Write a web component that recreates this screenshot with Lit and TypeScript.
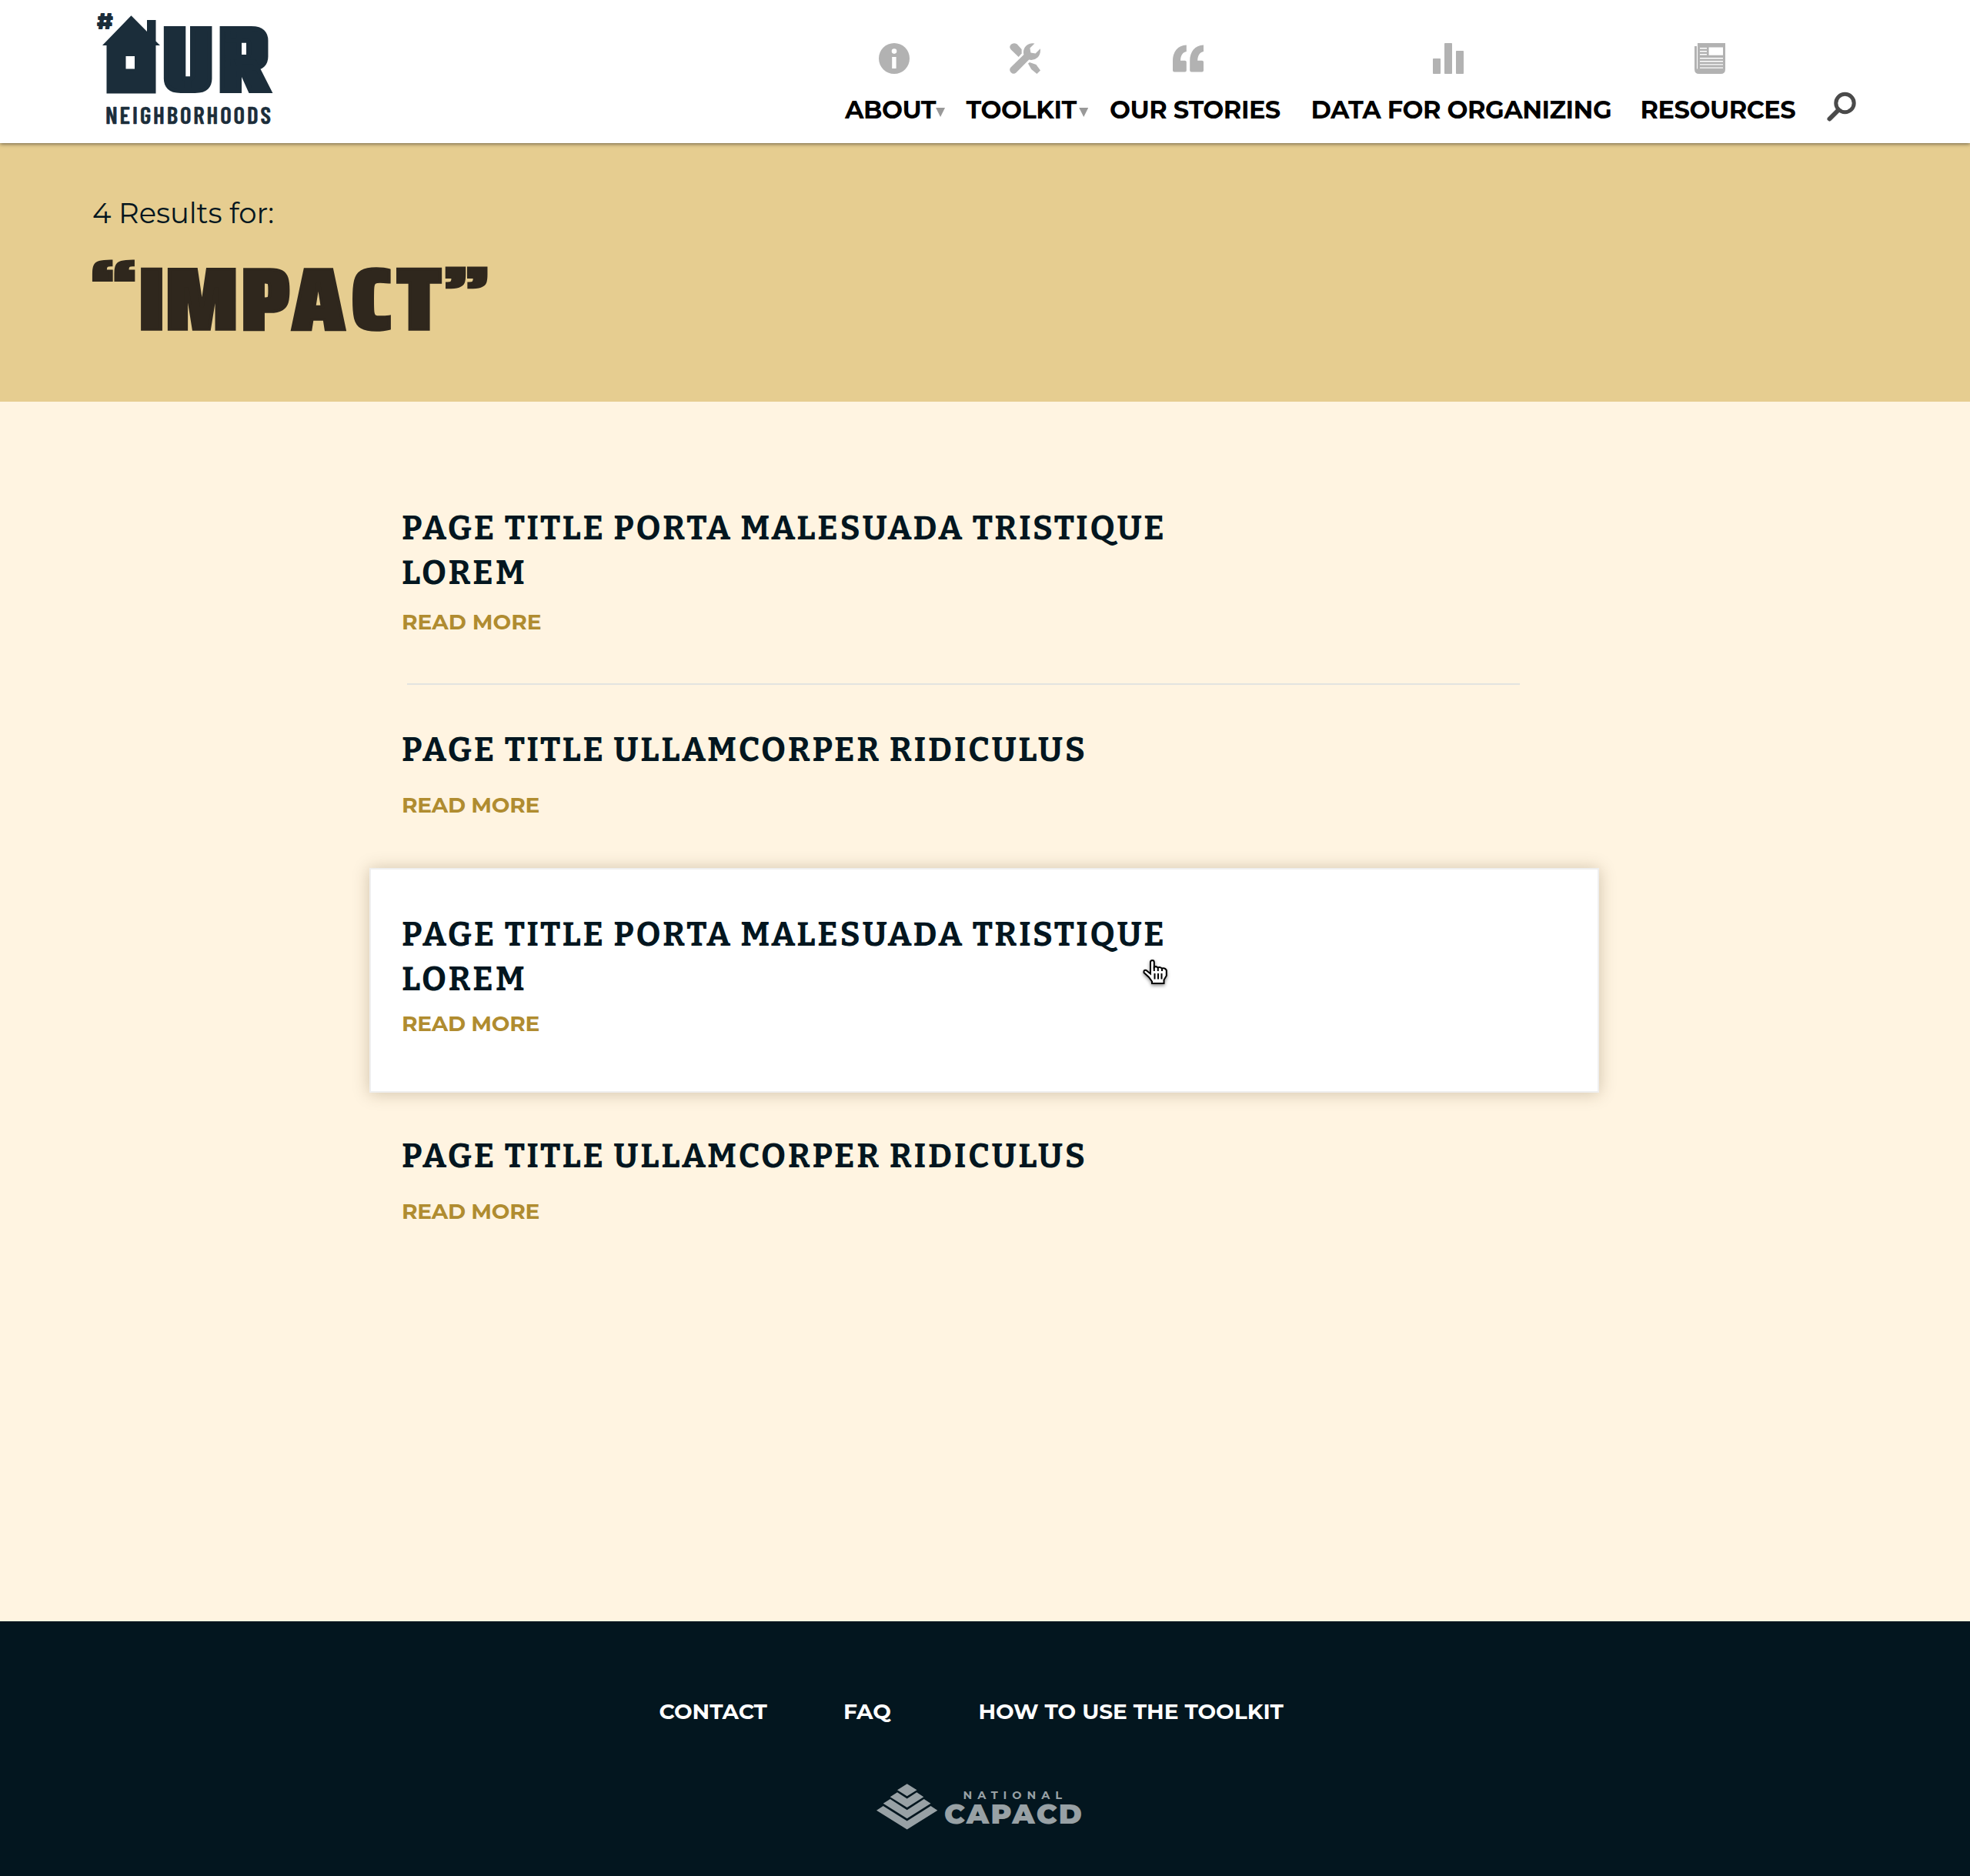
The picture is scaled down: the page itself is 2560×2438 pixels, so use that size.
import { LitElement, html, svg, css, nothing, type SVGTemplateResult } from "lit";
import { classMap } from "lit/directives/class-map.js";

const icons: Record<string, SVGTemplateResult> = {
  info: svg`<path fill-rule="evenodd" d="M20 0a20 20 0 1 1 0 40a20 20 0 0 1 0-40zM20 7.3a3.3 3.3 0 1 0 0 6.6a3.3 3.3 0 0 0 0-6.6zM17.2 18h5.4v15h-5.4z"/>`,
  tools: svg`<path d="M1.8 1.8Q5-1.2 9.5 1.2L15.6 8V13.5L11.6 18L1.8 8.6Q-1.4 5 1.8 1.8z"/>
    <path d="M32.5.6A11.5 11.5 0 0 0 18.2 9.5Q17.7 13 18.4 15L1.5 31.6A4.9 4.9 0 0 0 8.4 38.5L25.2 21.6C34 23.4 41.2 17 39.8 7.2L33.6 13.4L27.4 12.4L26.4 6.6z"/>
    <path d="M26 25L34.5 28L40 35.5L35.4 40L28.2 34L24 26.6z"/>`,
  quote: svg`<path d="M17.8 2.4V11C13 11.8 10.2 16 10 22.7H15.8Q17.8 22.7 17.8 24.7V35.4Q17.8 37.4 15.8 37.4H2Q0 37.4 0 35.4V23C0 11 6.5 2.8 17.8 2.4z"/>
    <path d="M40 2.4V11C35.2 11.8 32.4 16 32.2 22.7H38Q40 22.7 40 24.7V35.4Q40 37.4 38 37.4H24.2Q22.2 37.4 22.2 35.4V23C22.2 11 28.7 2.8 40 2.4z"/>`,
  bars: svg`<rect y="20" width="10" height="20" rx=".8"/><rect x="15" width="10" height="40" rx=".8"/><rect x="30" y="10" width="10" height="30" rx=".8"/>`,
  news: svg`<path fill-rule="evenodd" d="M4 0H40V34Q40 40 34 40H6Q0 40 0 34V4H3V33.5H4zM18.6 5.5V15.7H37V5.5zM7 6V7.4H16V6zM7 10V11.4H16V10zM7 14V15.4H16V14zM7 19V20.4H37V19zM7 23V24.4H37V23zM7 27.2V28.6H37V27.2zM7 31.4V32.8H37V31.4z"/>`,
};

const nav = [
  { id: "about", label: "About", icon: "info", caret: true },
  { id: "toolkit", label: "Toolkit", icon: "tools", caret: true },
  { id: "stories", label: "Our Stories", icon: "quote", caret: false },
  { id: "data", label: "Data for Organizing", icon: "bars", caret: false },
  { id: "resources", label: "Resources", icon: "news", caret: false },
];

class SiteHeader extends LitElement {
  static styles = css`
    :host { display: block; position: relative; z-index: 1; }
    .bar {
      display: flex; box-sizing: border-box; height: 186px; padding-left: 100px;
      background: #fff; box-shadow: 0 1px 5px rgba(0, 0, 0, .55);
      font: 700 32px/40px Montserrat, Inter, "Liberation Sans", sans-serif; color: #000;
    }
    .logo { display: block; flex: none; width: 300px; height: 180px; fill: #1b2d3a; overflow: visible; }
    .block { font: 700 100px Teko, "Open Sans", sans-serif; stroke: #1b2d3a; stroke-width: 6px; vector-effect: non-scaling-stroke; }
    .hash { font: 400 100px Bungee, "Liberation Sans", sans-serif; }
    .sub { font: 600 31px "Barlow Condensed", "Liberation Sans", sans-serif; stroke: #1b2d3a; stroke-width: .6px; }
    .nav {
      display: grid; grid-template-columns: 157.5px 186.5px 261.5px 428px 241.5px 40px;
      margin-left: 698px; padding-top: 56px; align-items: start;
    }
    .item { display: flex; flex-direction: column; gap: 26.5px; }
    .icon { display: block; width: 40px; height: 40px; fill: #b2b2b2; }
    .about { margin-left: 44px; }
    .toolkit { margin-left: 56.5px; }
    .stories { margin-left: 82px; }
    .data { margin-left: 158.5px; }
    .resources { margin-left: 70.5px; }
    .label { display: flex; white-space: nowrap; text-transform: uppercase; letter-spacing: -.5px; }
    .caret { width: 12px; height: 12px; margin-top: 17.5px; background: #999; clip-path: polygon(0 0, 100% 0, 50% 100%); }
    .caret-toolkit { margin-left: 3.5px; }
    .search { display: block; width: 40px; height: 40px; margin-top: 63px; fill: none; stroke: #4a4a4a; }
  `;
  render() {
    return html`<header class="bar">
      <svg class="logo" viewBox="0 0 300 180">
        <text class="hash" transform="matrix(.304 0 0 .281 25.1 37.7)">#</text>
        <path fill-rule="evenodd" d="M33 59L70.5 20.3L91 41V26H102.5V53.5L108 59H102.5V121.5H38.5V59zM63.5 73V89.5H75V73z"/>
        <text class="block" transform="matrix(1.28 0 0 1.255 0 118.3)" x="86.5 143.3">UR</text>
        <text class="sub" x="37" y="161" textLength="215">NEIGHBORHOODS</text>
      </svg>
      <nav class="nav">
        ${nav.map((n) => html`<a class="item">
          <svg class=${classMap({ icon: true, [n.id]: true })} viewBox="0 0 40 40">${icons[n.icon]}</svg>
          <span class="label">${n.label}${n.caret
            ? html`<i class=${classMap({ caret: true, ["caret-" + n.id]: true })}></i>`
            : nothing}</span>
        </a>`)}
        <svg class="search" viewBox="0 0 40 40">
          <circle cx="24.5" cy="15" r="11.7" stroke-width="5"/>
          <path d="M16 24L4.500 35.500" stroke-width="6" stroke-linecap="round"/>
        </svg>
      </nav>
    </header>`;
  }
}
customElements.define("site-header", SiteHeader);

class SearchBanner extends LitElement {
  static styles = css`
    :host { display: block; }
    .banner { box-sizing: border-box; height: 336px; padding: 68px 0 0 120px; background: #e6cd90; }
    .count { font: 400 37px/45px Montserrat, Inter, "Liberation Sans", sans-serif; color: #03161f; letter-spacing: -.05px; }
    .term { display: block; width: 540px; height: 110px; margin-top: 31px; fill: #2f271d; stroke: #2f271d; stroke-width: 4px; overflow: visible; }
    .word, .mark { font: 900 100px "Saira Condensed", "Open Sans", sans-serif; vector-effect: non-scaling-stroke; }
  `;
  render() {
    return html`<section class="banner">
      <div class="count">4 Results for:</div>
      <svg class="term" viewBox="0 0 540 110">
        <text class="mark" transform="matrix(1.333 0 0 .867 -4.67 68.8)">“</text>
        <text class="word" transform="matrix(1.31 0 0 1.143 0 98)" x="45.8 72.3 147.4 198.4 256.6 302.5">IMPACT</text>
        <text class="mark" transform="matrix(1.32 0 0 .867 454.3 77.8)">”</text>
      </svg>
    </section>`;
  }
}
customElements.define("search-banner", SearchBanner);

class ResultItem extends LitElement {
  static properties = { title1: {}, title2: {}, kind: {} };
  declare title1: string;
  declare title2: string;
  declare kind: string;
  static styles = css`
    :host { display: block; }
    .item { box-sizing: border-box; position: relative; padding: 0 42px; border: 0 solid #efefef; }
    .first { padding-top: 136px; height: 366px; }
    .plain { padding-top: 56px; height: 238px; }
    .hover { padding-top: 56px; height: 292px; border-width: 2px; padding-left: 40px; background: #fff; box-shadow: 0 1px 20px rgba(70, 50, 10, .26); }
    .last { padding-top: 54px; height: 687px; }
    .title { margin: 0; font: 700 43.7px/58px Bitter, "DejaVu Serif Condensed", serif; letter-spacing: 2.68px; color: #03161f; white-space: nowrap; }
    .more { display: block; margin-top: 25px; font: 700 28px/34px Montserrat, Inter, "Liberation Sans", sans-serif; letter-spacing: -.3px; color: #b08c30; }
    .first .more { margin-top: 17px; letter-spacing: 0; }
    .hover .more { margin-top: 11px; }
    .cursor { position: absolute; left: 1003px; top: 117px; width: 36px; height: 38px; fill: #fff; stroke: #000; stroke-width: 2; overflow: visible; filter: drop-shadow(0 2px 2px rgba(0, 0, 0, .45)); }
  `;
  render() {
    return html`<article class=${classMap({ item: true, [this.kind]: true })}>
      <h2 class="title">${this.title1}${this.title2 ? html`<br>${this.title2}` : nothing}</h2>
      <a class="more">READ MORE</a>
      ${this.kind === "hover"
        ? html`<svg class="cursor" viewBox="0 0 36 38">
            <path d="M10 18.5V3.5Q10 1 12.4 1T14.8 3.5V10Q17 8 19.6 10.5Q22 9 25 11.5Q29 10.5 30.8 14V21L27.5 26.5V31H12V28.5L8 23L1.5 17Q1 13 4.5 14z"/>
            <path d="M15.5 18V25.5M20 18V25.5M24.5 18V25.5M14.8 9V15M19.8 10V15M25 11V15" fill="none"/>
          </svg>`
        : nothing}
    </article>`;
  }
}
customElements.define("result-item", ResultItem);

class SiteFooter extends LitElement {
  static styles = css`
    :host { display: block; }
    .footer { box-sizing: border-box; height: 331px; padding-top: 100px; background: #03161f; }
    .links { display: grid; grid-template-columns: 239.5px 175.5px auto; padding-left: 856.5px; font: 700 28px/34px Montserrat, Inter, "Liberation Sans", sans-serif; color: #fff; }
    .brand { display: block; width: 270px; height: 60px; margin: 77px 0 0 1139px; fill: #98a1a5; overflow: visible; }
    .national { font: 700 14.5px Montserrat, Inter, sans-serif; }
    .capacd { font: 900 36.5px Montserrat, Inter, sans-serif; }
  `;
  render() {
    return html`<footer class="footer">
      <nav class="links"><a>CONTACT</a><a>FAQ</a><a>HOW TO USE THE TOOLKIT</a></nav>
      <svg class="brand" viewBox="0 0 270 60">
        <path d="M39.7 .3L52.5 8.3L39.7 16.3L27 8.3zM17.7 17.3L27 11.3L39.7 19.5L52.3 11.3L61.3 17.3L39.7 31zM8.7 25.8L17.7 20L39.7 34.3L61.7 20L70.5 25.8L39.7 45.2zM0 34.7L8.7 29L39.7 48.5L70.5 29L79.3 34.7L39.7 59.6z"/>
        <text class="national" x="112.5" y="20" textLength="128.5">NATIONAL</text>
        <text class="capacd" x="88" y="52" textLength="179">CAPACD</text>
      </svg>
    </footer>`;
  }
}
customElements.define("site-footer", SiteFooter);

class AppRoot extends LitElement {
  static styles = css`
    :host { display: block; }
    .results { box-sizing: border-box; height: 1585px; width: 2560px; padding: 0 482px 0 480px; background: #fff4e1; }
    .rule { height: 2px; margin: 0 103px 0 49px; background: #e3e3e0; }
  `;
  render() {
    const long = "PAGE TITLE PORTA MALESUADA TRISTIQUE";
    const short = "PAGE TITLE ULLAMCORPER RIDICULUS";
    return html`
      <site-header></site-header>
      <search-banner></search-banner>
      <main class="results">
        <result-item kind="first" .title1=${long} .title2=${"LOREM"}></result-item>
        <div class="rule"></div>
        <result-item kind="plain" .title1=${short}></result-item>
        <result-item kind="hover" .title1=${long} .title2=${"LOREM"}></result-item>
        <result-item kind="last" .title1=${short}></result-item>
      </main>
      <site-footer></site-footer>`;
  }
}
customElements.define("app-root", AppRoot);
